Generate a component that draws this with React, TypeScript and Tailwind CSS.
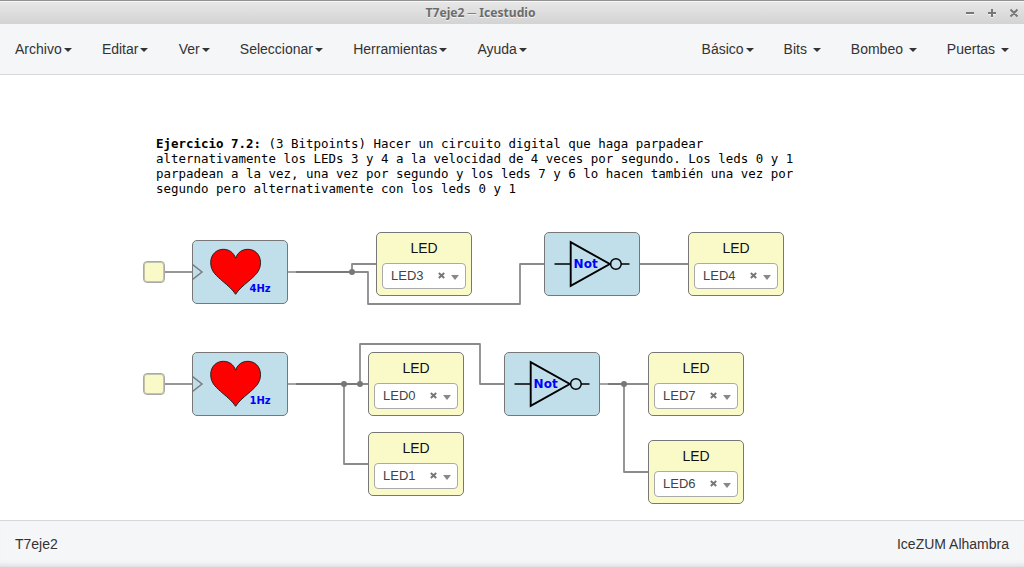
const leftMenus = ["Archivo", "Editar", "Ver", "Seleccionar", "Herramientas", "Ayuda"];
const rightMenus = ["Básico", "Bits ", "Bombeo ", "Puertas "];

const noteLines = [
  "alternativamente los LEDs 3 y 4 a la velocidad de 4 veces por segundo. Los leds 0 y 1",
  "parpadean a la vez, una vez por segundo y los leds 7 y 6 lo hacen también una vez por",
  "segundo pero alternativamente con los leds 0 y 1",
];

type Point = { x: number; y: number };

const leds: (Point & { pin: string })[] = [
  { x: 376, y: 157, pin: "LED3" },
  { x: 688, y: 157, pin: "LED4" },
  { x: 368, y: 277, pin: "LED0" },
  { x: 368, y: 357, pin: "LED1" },
  { x: 648, y: 277, pin: "LED7" },
  { x: 648, y: 365, pin: "LED6" },
];

const hearts: (Point & { rate: string })[] = [
  { x: 192, y: 165, rate: "4Hz" },
  { x: 192, y: 277, rate: "1Hz" },
];

const gates: Point[] = [
  { x: 544, y: 157 },
  { x: 504, y: 277 },
];

const inputs: Point[] = [
  { x: 143, y: 186 },
  { x: 143, y: 298 },
];

const wires = [
  "M164 197H192",
  "M296 197H352V189H376",
  "M296 197H368V229H520V189H544",
  "M640 189H688",
  "M164 309H192",
  "M296 309H344V389H368",
  "M296 309H368",
  "M296 309H360V269H480V309H504",
  "M608 309H648",
  "M608 309H624V397H648",
];

const stubs = ["M288 197H296", "M288 309H296", "M600 309H608"];

const junctions: Point[] = [
  { x: 352, y: 197 },
  { x: 344, y: 309 },
  { x: 360, y: 309 },
  { x: 624, y: 309 },
];

function Menu({ label }: { label: string }) {
  return (
    <button className="flex h-full items-center whitespace-pre px-[15px] text-[14px] text-[#333]">
      <span>{label}</span>
      <span className="ml-[2px] mt-[1px] h-0 w-0 border-x-4 border-t-4 border-x-transparent border-t-[#333]" />
    </button>
  );
}

function Led({ x, y, pin }: Point & { pin: string }) {
  return (
    <div
      className="absolute flex h-16 w-24 flex-col items-center rounded-[5px] border border-[#777] bg-[#fafac8]"
      style={{ left: x, top: y }}
    >
      <span className="mt-[5px] text-[14px] leading-5 text-[#111]">LED</span>
      <div className="mt-[5px] flex h-[26px] w-[84px] items-center rounded-[4px] border border-[#aaa] bg-white pl-[8px] pr-[6px] text-[13px] text-[#444]">
        <span className="flex-1 pb-[2px] leading-none">{pin}</span>
        <svg className="mb-[1px] mr-[6px] h-[7px] w-[7px]" viewBox="0 0 7 7">
          <path d="M0.8 1L6.2 6M6.2 1L0.8 6" stroke="#777" strokeWidth="2" />
        </svg>
        <span className="mt-[3px] h-0 w-0 border-x-4 border-t-[5px] border-x-transparent border-t-[#888]" />
      </div>
    </div>
  );
}

function Heart({ x, y, rate }: Point & { rate: string }) {
  return (
    <div
      className="absolute h-16 w-24 rounded-[5px] border border-[#777] bg-[#c0dfeb]"
      style={{ left: x, top: y }}
    >
      <svg className="h-full w-full" viewBox="1 1 94 62">
        <path d="M0.5 24.5L10 32L0.5 39.5" fill="none" stroke="#777" strokeWidth="1.4" />
        <path
          d="M43.6 54.3C40.5 49.5 36.5 46.2 31 41.5C24.5 35.8 18.7 31.5 18.7 22.6C18.7 14.5 24.5 9.3 31.3 9.3C37 9.3 41.6 12.4 43.6 18.2C45.6 12.4 50.2 9.3 55.9 9.3C62.7 9.3 68.5 14.5 68.5 22.6C68.5 31.5 62.7 35.8 56.2 41.5C50.7 46.2 46.7 49.5 43.6 54.3Z"
          fill="#f00"
          stroke="#222"
          strokeWidth="1"
        />
        <text x="57.5" y="51.7" className="fill-[#00f] font-['DejaVu_Sans',sans-serif] text-[10px] font-bold">
          {rate}
        </text>
      </svg>
    </div>
  );
}

function NotGate({ x, y }: Point) {
  return (
    <div
      className="absolute h-16 w-24 rounded-[5px] border border-[#777] bg-[#c0dfeb]"
      style={{ left: x, top: y }}
    >
      <svg className="h-full w-full" viewBox="1 1 94 62" fill="none" stroke="#000">
        <path d="M10.5 32H26.5M77 32H85.5" strokeWidth="1.3" />
        <path d="M26.7 10.2V53.8L65.8 32Z" strokeWidth="1.9" />
        <circle cx="71.9" cy="32" r="5.3" strokeWidth="1.5" />
        <text x="29.6" y="36" stroke="none" className="fill-[#00f] font-['DejaVu_Sans',sans-serif] text-[12px] font-bold">
          Not
        </text>
      </svg>
    </div>
  );
}

export default function App() {
  return (
    <div className="flex h-[567px] w-[1024px] flex-col overflow-hidden bg-white font-['Liberation_Sans',sans-serif]">
      <header className="flex h-6 shrink-0 items-center justify-end border-t border-[#929292] bg-linear-to-b from-[#e8e8e8] to-[#d3d3d3] shadow-[inset_0_1px_0_#f7f7f7]">
        <h1 className="flex-1 pr-[4px] pt-[2px] text-center font-['Noto_Sans',sans-serif] text-[12.1px] font-bold text-[#6c6c6c] [text-shadow:0_1px_0_#f4f4f4]">
          T7eje2 <span className="font-normal">─</span> Icestudio
        </h1>
        <svg className="mr-[5px] h-[11px] w-[54px] shrink-0" viewBox="0 0 54 11" fill="none" strokeWidth="2">
          <path d="M1 7H9M23 7H31M27 3V11M46 3L52 9M52 3L46 9" stroke="#f4f4f4" />
          <path d="M1 6H9M23 6H31M27 2V10M45.5 2.5L52.5 9.5M52.5 2.5L45.5 9.5" stroke="#777" />
        </svg>
      </header>

      <nav className="flex h-[51px] shrink-0 justify-between border-b border-[#d5d8db] bg-[#f5f6f8]">
        <div className="flex gap-[0.2px]">
          {leftMenus.map((label) => (
            <Menu key={label} label={label} />
          ))}
        </div>
        <div className="flex">
          {rightMenus.map((label) => (
            <Menu key={label} label={label} />
          ))}
        </div>
      </nav>

      <main className="relative h-[445px] shrink-0">
        <div className="whitespace-pre pl-[156px] pt-[61px] font-['DejaVu_Sans_Mono',monospace] text-[12.46px] leading-[15px] text-black">
          <p>
            <b>Ejercicio 7.2:</b>
            {" (3 Bitpoints) Hacer un circuito digital que haga parpadear"}
          </p>
          {noteLines.map((line) => (
            <p key={line}>{line}</p>
          ))}
        </div>
        <svg className="absolute inset-0 h-full w-full" viewBox="0 0 1024 445" fill="none" stroke="#777">
          {stubs.map((d) => (
            <path key={d} d={d} strokeWidth="1.5" strokeOpacity="0.9" />
          ))}
          {wires.map((d) => (
            <path key={d} d={d} strokeWidth="1.8" strokeOpacity="0.85" strokeLinejoin="round" />
          ))}
          {junctions.map(({ x, y }) => (
            <circle key={`${x}-${y}`} cx={x} cy={y} r="3" fill="#777" stroke="none" />
          ))}
        </svg>
        {inputs.map(({ x, y }) => (
          <div
            key={y}
            className="absolute h-[22px] w-[22px] rounded-[4px] border border-[#aaa] bg-[#fafac8] shadow-[inset_0_0_0_1px_#c4c4ac]"
            style={{ left: x, top: y }}
          />
        ))}
        {hearts.map((node) => (
          <Heart key={node.rate} {...node} />
        ))}
        {gates.map((node) => (
          <NotGate key={node.x} {...node} />
        ))}
        {leds.map((node) => (
          <Led key={node.pin} {...node} />
        ))}
      </main>

      <footer className="flex flex-1 items-center justify-between border-t border-[#d5d8db] bg-[#f5f6f8] px-[15px] text-[14px] text-[#333] shadow-[inset_0_-6px_5px_-4px_#dcdcdc]">
        <span>T7eje2</span>
        <span>IceZUM Alhambra</span>
      </footer>
    </div>
  );
}
